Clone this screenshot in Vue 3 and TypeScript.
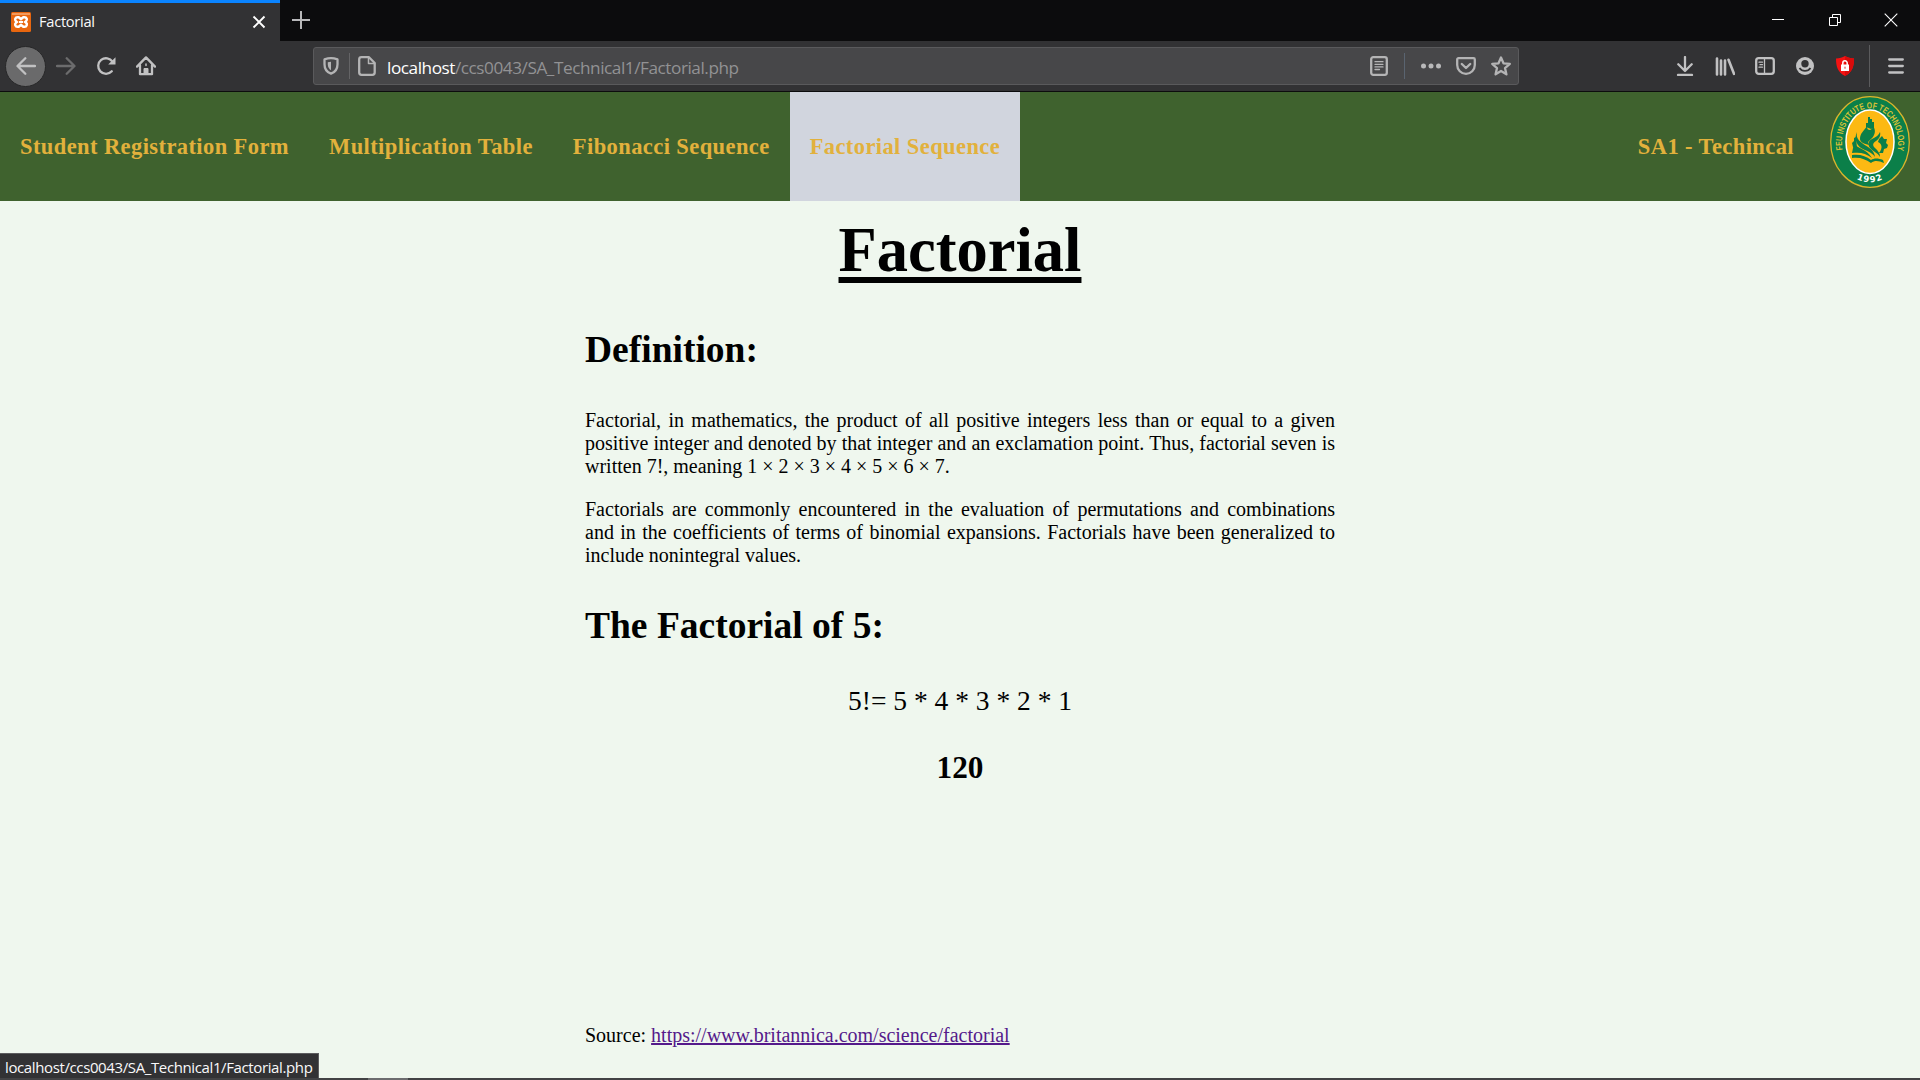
<script setup lang="ts">
interface NavLink {
  label: string
  active?: boolean
}

const links: NavLink[] = [
  { label: 'Student Registration Form' },
  { label: 'Multiplication Table' },
  { label: 'Fibonacci Sequence' },
  { label: 'Factorial Sequence', active: true },
]

const host = 'localhost'
const path = '/ccs0043/SA_Technical1/Factorial.php'
const source = 'https://www.britannica.com/science/factorial'
</script>

<template>
  <div class="window">
    <div class="titlebar">
      <div class="tab">
        <svg class="favicon" width="20" height="20" viewBox="0 0 20 20">
          <rect width="20" height="20" rx="1.5" fill="#e8660f" />
          <rect x="1" y="1" width="18" height="2" fill="#f39a5c" />
          <path d="M6.500 5.200h1.200l2.300 2 2.300-2h1.200a2.300 2.300 0 0 1 1.600 4l-.9.8.9.8a2.300 2.300 0 0 1-1.600 4h-1.200L10 12.800l-2.300 2H6.500a2.300 2.300 0 0 1-1.600-4l.9-.8-.9-.8a2.300 2.300 0 0 1 1.600-4z" fill="none" stroke="#fff" stroke-width="2.500" />
          <path d="M8 10h4" stroke="#fff" stroke-width="2" />
        </svg>
        <span class="tab-title">Factorial</span>
        <svg class="tab-close" width="14" height="14" viewBox="0 0 14 14">
          <path d="M1.500 1.500l11 11M12.500 1.500l-11 11" stroke="#fff" stroke-width="1.900" />
        </svg>
      </div>
      <svg class="new-tab" width="18" height="18" viewBox="0 0 18 18">
        <path d="M9 .5v17M.5 9h17" stroke="#b9b9ba" stroke-width="2" stroke-linecap="round" />
      </svg>
      <div class="controls">
        <svg width="13" height="14" viewBox="0 0 13 14"><path d="M0 6.500h12" stroke="#fff" /></svg>
        <svg class="restore" width="13" height="14" viewBox="0 0 13 14">
          <path d="M.5 4.500h8v8h-8zM3.500 4v-2.500h8v8h-3" fill="none" stroke="#fff" />
        </svg>
        <svg width="14" height="14" viewBox="0 0 14 14"><path d="M.7 .7l12.600 12.600M13.300 .7L.7 13.300" stroke="#fff" stroke-width="1.100" /></svg>
      </div>
    </div>

    <div class="toolbar">
      <div class="nav-buttons">
        <span class="back">
          <svg width="20" height="20" viewBox="0 0 20 20" class="line"><path d="M19 10H1.800M9.300 2.200L1.500 10l7.800 7.800" /></svg>
        </span>
        <svg width="20" height="20" viewBox="0 0 20 20" class="line dim"><path d="M1 10h17.200M10.700 2.200L18.500 10l-7.800 7.800" /></svg>
        <svg width="20" height="20" viewBox="0 0 20 20" class="line">
          <path d="M15.800 15.300a7.800 7.800 0 1 1 .7-9.600" />
          <path d="M19.500 1.200v7.300h-7.300z" fill="#c1c1c2" stroke="none" />
        </svg>
        <svg width="20" height="20" viewBox="0 0 20 20" class="line">
          <path d="M1 10.600L10 1.400l9 9.200M4 9.200v9h12v-9" />
          <path d="M8 18v-5.500h4V18z" fill="#c1c1c2" stroke-width="1" />
          <path d="M10 8v1.500" stroke-width="1.500" />
        </svg>
      </div>

      <div class="urlbar">
        <svg width="18" height="18" viewBox="0 0 18 18" class="line shield">
          <path d="M9 1.200c2.300 0 4.500.5 6.500 1.200v4.800c0 4.500-2.500 8-6.500 9.500-4-1.500-6.500-5-6.500-9.500V2.400C4.500 1.700 6.700 1.200 9 1.200z" />
          <path d="M9 4.700v8.500c-2-1.200-3.200-3.300-3.200-6V5.200z" fill="#b4b4b5" stroke="none" />
        </svg>
        <i class="divider"></i>
        <svg width="20" height="20" viewBox="0 0 20 20" class="line page-icon">
          <path d="M4.500 1.200H12L17.700 7v9.500a2.300 2.300 0 0 1-2.300 2.300H4.500a2.300 2.300 0 0 1-2.300-2.300v-13a2.300 2.300 0 0 1 2.300-2.300z" />
          <path d="M11.500 1.500V7.500H17.500" stroke-width="1.500" />
        </svg>
        <span class="address"><b>{{ host }}</b>{{ path }}</span>
        <div class="url-actions">
          <svg width="18" height="20" viewBox="0 0 18 20" class="line reader">
            <rect x="1.200" y="1.200" width="15.600" height="17.600" rx="2" />
            <path d="M5 5.700h8M5 8.300h8M5 10.900h8M5 13.500h4.500" stroke-width="1.300" />
          </svg>
          <i class="divider blue"></i>
          <svg width="20" height="20" viewBox="0 0 20 20" class="dots" fill="#b9b9ba">
            <circle cx="2.500" cy="10" r="2.500" /><circle cx="10" cy="10" r="2.500" /><circle cx="17.500" cy="10" r="2.500" />
          </svg>
          <svg width="20" height="18" viewBox="0 0 20 18" class="line pocket">
            <path d="M2.500 1.200h15a1.300 1.300 0 0 1 1.300 1.300V8a8.800 8.800 0 0 1-17.600 0V2.500a1.300 1.300 0 0 1 1.300-1.300z" />
            <path d="M5.800 7l4.200 4 4.200-4" stroke-width="2.400" />
          </svg>
          <svg width="20" height="20" viewBox="0 0 20 20" class="line star">
            <path d="M10 1.500l2.500 5.800 6.300.6-4.800 4.200 1.400 6.200-5.400-3.300-5.400 3.300L6 12.100 1.200 7.900l6.300-.6z" />
          </svg>
        </div>
      </div>

      <div class="tools">
        <svg width="20" height="20" viewBox="-1 0 20 20" class="line">
          <path d="M9 1v13.500M2.300 8.300L9 15l6.700-6.700M2 19h14" />
        </svg>
        <svg width="20" height="20" viewBox="0 0 20 20" class="line library">
          <path d="M2 2.500v16M6 4.500v14M10 4.500v14M13.500 3.800l5.500 14" />
        </svg>
        <svg width="20" height="20" viewBox="0 0 20 20" class="line">
          <rect x="1.200" y="2.200" width="17.600" height="15.600" rx="2.500" />
          <path d="M9.500 3v14" stroke-width="1.300" />
          <path d="M4 6.200h3.500M5 8.700h2.500M4 11.200h3.500" stroke-width="1.300" />
        </svg>
        <svg width="20" height="20" viewBox="0 0 20 20">
          <circle cx="10" cy="10" r="9" fill="#c1c1c2" />
          <circle cx="10" cy="7.800" r="3.700" fill="#323234" />
          <path d="M4.500 12c1.300 1.900 3.200 2.900 5.500 2.900s4.200-1 5.500-2.900" fill="none" stroke="#323234" stroke-width="1.700" />
        </svg>
        <svg width="20" height="20" viewBox="0 0 20 20">
          <path d="M10 0c2.500 1.700 5.500 2.400 9 2.500 0 8-1.500 13.500-9 17.500C2.500 16 1 10.500 1 2.500 4.500 2.400 7.500 1.700 10 0z" fill="#f51212" />
          <path d="M10 0c2.500 1.700 5.500 2.400 9 2.500 0 8-1.500 13.500-9 17.500z" fill="#d90b0b" />
          <rect x="6" y="8.500" width="8" height="6.500" fill="#fff" />
          <path d="M7.800 9V7a2.200 2.200 0 0 1 4.400 0v2" fill="none" stroke="#fff" stroke-width="1.500" />
          <rect x="9.500" y="10.700" width="1" height="2" fill="#d22" />
        </svg>
      </div>
      <i class="tool-divider"></i>
      <svg width="16" height="18" viewBox="0 0 16 18" class="line menu"><path d="M1.200 2.500h13.600M1.200 9h13.600M1.200 15.500h13.600" /></svg>
    </div>

    <nav class="site-nav">
      <a v-for="link in links" :key="link.label" :class="{ active: link.active }">{{ link.label }}</a>
      <span class="brand">SA1 - Techincal</span>
      <svg class="logo" width="80" height="92" viewBox="0 0 80 92">
        <defs>
          <path id="ring" d="M12.600 54A28 34.500 0 1 1 67.400 54" />
          <path id="ring-bottom" d="M18 76.700A34 40 0 0 0 62 76.700" />
        </defs>
        <ellipse cx="40" cy="46" rx="39.300" ry="45.300" fill="#0b7f49" stroke="#d9b52c" stroke-width="1.300" />
        <ellipse cx="40" cy="45.700" rx="24" ry="31.700" fill="#fcb913" stroke="#fff" stroke-width="1.500" />
        <text class="ring-text"><textPath href="#ring" textLength="113" lengthAdjust="spacingAndGlyphs">FEU INSTITUTE OF TECHNOLOGY</textPath></text>
        <text class="ring-year"><textPath href="#ring-bottom" startOffset="50%" text-anchor="middle">1992</textPath></text>
        <g fill="#0b7f49">
          <path d="M36 31v-4h2v-6h2v2h2v3h2v6l-3 1z" />
          <path d="M30 43c0-6 4-8 7-13 0 3 1 4 3 4 2-1 3-2 3-4 3 4 2 8 0 11l-5 5 1 3c-5-1-9-3-9-6z" />
          <path d="M27 36c-1 5 1 8 5 11 5 4 12 6 13 14-3-5-9-6-14-9-5-4-7-10-4-16z" />
          <path d="M50 36c1 4-1 7-4 9-3 2-4 4-1 7 3 3 5 5 5 9-2-4-6-5-9-8-4-4-3-8 1-10 4-2 7-4 8-7z" />
          <path d="M24 47c3 6 12 5 18 15-6-5-12-6-20-5z" />
          <path d="M22 59c8-1 14 1 19 5 3-2 7-2 12 0l1 3c-5-2-9-3-13 0-6-4-11-6-19-5z" />
          <path d="M49 43l3-3 2 3 3 0-1 4 2 2-1 3-3 1-1 4-4 0c4-5 3-9-1-11zM26 41l-2 1 0 3-2 2 1 4 4 1z" />
        </g>
      </svg>
    </nav>

    <main>
      <article>
        <h1>Factorial</h1>
        <h2>Definition:</h2>
        <p>Factorial, in mathematics, the product of all positive integers less than or equal to a given positive integer and denoted by that integer and an exclamation point. Thus, factorial seven is written 7!, meaning 1 × 2 × 3 × 4 × 5 × 6 × 7.</p>
        <p>Factorials are commonly encountered in the evaluation of permutations and combinations and in the coefficients of terms of binomial expansions. Factorials have been generalized to include nonintegral values.</p>
        <h2 class="second">The Factorial of 5:</h2>
        <div class="formula">5!= 5 * 4 * 3 * 2 * 1</div>
        <div class="result">120</div>
        <footer>Source: <a>{{ source }}</a></footer>
      </article>
    </main>
    <div class="taskbar-edge"><i></i></div>
    <div class="status">{{ host }}{{ path }}</div>
  </div>
</template>

<style>
body {
  margin: 0;
  overflow: hidden;
}
</style>

<style scoped>
.window {
  position: relative;
  display: flex;
  flex-direction: column;
  width: 1920px;
  height: 1080px;
  overflow: hidden;
  background: #eff7ee;
  font-family: "Liberation Serif", "Times New Roman", serif;
  color: #000;
}
svg { display: block; flex: none; }
.line {
  fill: none;
  stroke: #c1c1c2;
  stroke-width: 2.3;
  stroke-linecap: round;
  stroke-linejoin: round;
}
.titlebar {
  display: flex;
  height: 41px;
  flex: none;
  background: #0c0c0d;
}
.tab {
  box-sizing: border-box;
  display: flex;
  align-items: center;
  width: 280px;
  padding: 0 14px 0 11px;
  border-top: 3px solid #0a84ff;
  background: #323234;
}
.favicon { margin-top: -1px; }
.tab-title {
  flex: 1;
  padding: 0 0 2px 8px;
  font: 14.7px "Open Sans", sans-serif;
  letter-spacing: -0.3px;
  color: #f9f9fa;
}
.new-tab { margin: 11px 0 0 12px; }
.controls {
  display: flex;
  gap: 42px;
  margin: 13px 22px 0 auto;
}
.restore { margin-left: 2px; }
.toolbar {
  box-sizing: border-box;
  display: flex;
  align-items: center;
  height: 51px;
  flex: none;
  border-bottom: 1px solid #0c0c0d;
  background: #323234;
}
.nav-buttons {
  display: flex;
  align-items: center;
  gap: 20px;
  width: 313px;
}
.back {
  box-sizing: border-box;
  display: flex;
  align-items: center;
  justify-content: center;
  width: 41px;
  height: 41px;
  margin: 0 -10px 0 5px;
  border: 1px solid #272728;
  border-radius: 50%;
  background: #6a6a6b;
}
.dim { stroke: #6c6c6d; }
.library { stroke-width: 2.6; }
.urlbar {
  box-sizing: border-box;
  display: flex;
  align-items: center;
  width: 1206px;
  height: 38px;
  padding-left: 8px;
  border: 1px solid #5a5a5c;
  border-radius: 3px;
  background: #474749;
}
.urlbar .line { stroke: #b4b4b5; }
.divider {
  width: 1px;
  height: 26px;
  background: #646466;
}
.blue { background: #5a6470; }
.shield { margin-right: 9px; }
.page-icon { margin: 0 10px 0 7px; }
.address {
  padding-top: 2px;
  font: 17.2px "Open Sans", sans-serif;
  letter-spacing: -0.45px;
  color: #929294;
  white-space: nowrap;
}
.address b {
  font-weight: 400;
  color: #fff;
}
.url-actions {
  display: flex;
  align-items: center;
  margin-left: auto;
  padding-right: 7px;
}
.reader { margin-right: 16px; }
.dots { margin: 0 15px 0 16px; }
.pocket { margin-right: 15px; }
.tools {
  display: flex;
  gap: 20px;
  margin-left: 156px;
}
.tool-divider {
  width: 1px;
  height: 42px;
  margin: 0 18px 0 14px;
  background: #5b5b5d;
}
.site-nav {
  display: flex;
  height: 109px;
  flex: none;
  background: #3f622e;
  color: #e2b13c;
  font-size: 22.5px;
  font-weight: 700;
  letter-spacing: 0.41px;
  line-height: 110px;
  white-space: nowrap;
}
.site-nav a { padding: 0 20px; }
.site-nav .active { background: #d1d5de; }
.brand { margin-left: auto; }
.logo { margin: 4px 10px 0 36px; }
.ring-text {
  font: 700 9px "Liberation Sans", sans-serif;
  letter-spacing: 0;
  fill: #d9c136;
}
.ring-year {
  font: 700 8.5px "DejaVu Sans", sans-serif;
  letter-spacing: 1px;
  fill: #fff;
}
main {
  display: flex;
  justify-content: center;
  flex: 1;
}
article {
  display: flex;
  flex-direction: column;
  width: 750px;
  font-size: 20px;
  line-height: 23px;
}
h1 {
  align-self: center;
  margin: 12px 0 0;
  font-size: 62.5px;
  line-height: 74px;
  text-decoration: underline;
  text-decoration-thickness: 6px;
  text-underline-offset: 6px;
  text-decoration-skip-ink: none;
}
h2 {
  margin: 41px 0 27px;
  font-size: 37.5px;
  line-height: 44px;
}
h2.second { margin: 27px 0 0; }
p {
  margin: 10px 0 10px;
  text-align: justify;
}
.formula {
  margin-top: 37px;
  text-align: center;
  font-size: 27.5px;
  line-height: 32px;
}
.result {
  margin-top: 33px;
  text-align: center;
  font-size: 31.25px;
  font-weight: 700;
  line-height: 36px;
}
footer { margin: auto 0 31px; }
footer a {
  color: #551a8b;
  text-decoration: underline;
}
.taskbar-edge {
  display: flex;
  height: 2px;
  flex: none;
  background: #424244;
}
.taskbar-edge i {
  width: 40px;
  margin-left: 368px;
  background: #6c6c6e;
}
.status {
  position: absolute;
  left: 0;
  bottom: 2px;
  box-sizing: border-box;
  width: 319px;
  height: 25px;
  padding-left: 5px;
  border-top: 1px solid #5c5c5e;
  border-right: 1px solid #5c5c5e;
  background: #323234;
  font: 15px/27px "Open Sans", sans-serif;
  letter-spacing: -0.38px;
  color: #f9f9fa;
  white-space: nowrap;
}
</style>
